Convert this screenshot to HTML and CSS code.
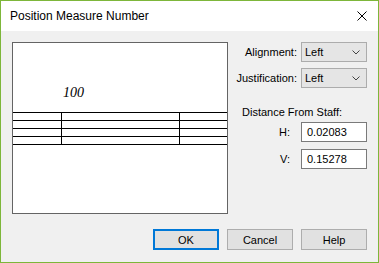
FILE: index.html
```html
<!DOCTYPE html>
<html>
<head>
<meta charset="utf-8">
<link rel="stylesheet" href="styles.css">
</head>
<body>
<div class="window">
  <div class="titlebar">
    <span class="title">Position Measure Number</span>
    <svg class="close" width="10" height="10" viewBox="0 0 10 10"><path d="M0.5 0.5 L9.5 9.5 M9.5 0.5 L0.5 9.5" stroke="#000" stroke-width="1" fill="none"/></svg>
  </div>
  <div class="content">
    <div class="main">
      <div class="preview">
        <svg width="214" height="170" viewBox="0 0 214 170">
          <text x="50" y="54" class="num">100</text>
          <g stroke="#000" stroke-width="1" fill="none" shape-rendering="crispEdges">
            <line x1="0" y1="69.5" x2="214" y2="69.5"/>
            <line x1="0" y1="77.5" x2="214" y2="77.5"/>
            <line x1="0" y1="85.5" x2="214" y2="85.5"/>
            <line x1="0" y1="93.5" x2="214" y2="93.5"/>
            <line x1="0" y1="101.5" x2="214" y2="101.5"/>
            <line x1="48.5" y1="69" x2="48.5" y2="102"/>
            <line x1="166.5" y1="69" x2="166.5" y2="102"/>
          </g>
        </svg>
      </div>
      <div class="panel">
        <div class="grid top">
          <label class="lbl">Alignment:</label>
          <div class="select"><span>Left</span><svg width="8" height="5" viewBox="0 0 8 5"><path d="M0.5 0.5 L4 4 L7.5 0.5" stroke="#444" fill="none"/></svg></div>
          <label class="lbl">Justification:</label>
          <div class="select"><span>Left</span><svg width="8" height="5" viewBox="0 0 8 5"><path d="M0.5 0.5 L4 4 L7.5 0.5" stroke="#444" fill="none"/></svg></div>
        </div>
        <div class="group-title">Distance From Staff:</div>
        <div class="grid dist">
          <label class="lbl">H:</label>
          <div class="input">0.02083</div>
          <label class="lbl">V:</label>
          <div class="input">0.15278</div>
        </div>
      </div>
    </div>
    <div class="buttons">
      <button class="btn default">OK</button>
      <button class="btn">Cancel</button>
      <button class="btn">Help</button>
    </div>
  </div>
</div>
</body>
</html>
```
FILE: styles.css
```css
html, body {
  margin: 0;
  padding: 0;
  background: #f0f0f0;
}
.window {
  width: 379px;
  height: 263px;
  box-sizing: border-box;
  border: 1px solid #7db63a;
  background: #f0f0f0;
  display: flex;
  flex-direction: column;
  font-family: "Liberation Sans", Arial, sans-serif;
  font-size: 11px;
  color: #000;
}
.titlebar {
  height: 30px;
  flex: none;
  background: #fff;
  display: flex;
  align-items: center;
  justify-content: space-between;
  padding: 0 11px 0 9px;
}
.title {
  font-size: 12px;
}
.close {
  display: block;
}
.content {
  flex: 1;
  padding: 11px 11px 12px 11px;
  display: flex;
  flex-direction: column;
}
.main {
  display: flex;
}
.preview {
  width: 216px;
  height: 172px;
  box-sizing: border-box;
  border: 1px solid #646464;
  background: #fff;
}
.preview svg {
  display: block;
}
.num {
  font-family: "Liberation Serif", "Times New Roman", serif;
  font-style: italic;
  font-size: 14px;
  fill: #000;
}
.panel {
  flex: 1;
  display: flex;
  flex-direction: column;
}
.grid {
  display: grid;
  grid-template-columns: 1fr 66px;
  column-gap: 4px;
  align-items: center;
}
.top {
  row-gap: 6px;
}
.lbl {
  text-align: right;
}
.select {
  height: 20px;
  box-sizing: border-box;
  border: 1px solid #acacac;
  background: #e5e5e5;
  display: flex;
  align-items: center;
  justify-content: space-between;
  padding: 0 6px 0 3px;
}
.group-title {
  margin-top: 18px;
  padding-left: 14px;
}
.dist {
  margin-top: 4px;
  row-gap: 7px;
  grid-template-columns: 1fr 66px;
  column-gap: 11px;
}
.input {
  height: 20px;
  box-sizing: border-box;
  border: 1px solid #7a7a7a;
  background: #fff;
  display: flex;
  align-items: center;
  padding-left: 5px;
}
.buttons {
  margin-top: auto;
  display: flex;
  justify-content: flex-end;
  gap: 8px;
}
.btn {
  width: 66px;
  height: 21px;
  box-sizing: border-box;
  border: 1px solid #adadad;
  background: #e1e1e1;
  font-family: inherit;
  font-size: 11px;
  color: #000;
  padding: 0;
  margin: 0;
}
.btn.default {
  border: 2px solid #0078d7;
}
```
